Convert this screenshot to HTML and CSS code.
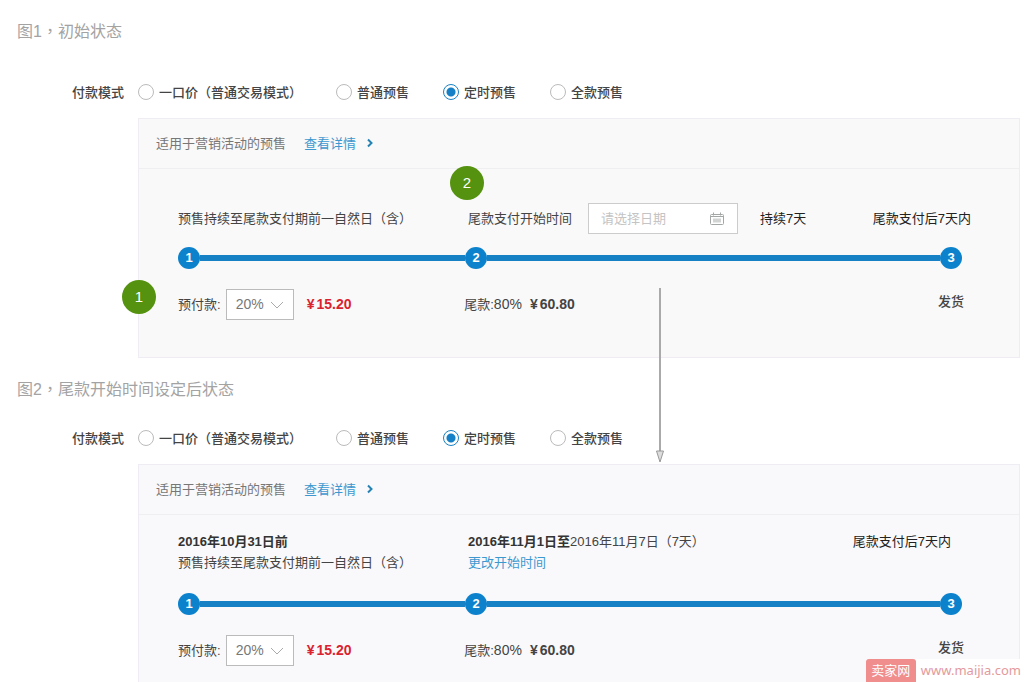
FILE: index.html
```html
<!DOCTYPE html>
<html lang="zh-CN">
<head>
<meta charset="utf-8">
<title>付款模式</title>
<link rel="stylesheet" href="styles.css">
</head>
<body>
<main class="page">
  <section class="figure">
    <h2 class="caption" lang="zh-TW">图1，初始状态</h2>
    <div class="modes" role="radiogroup" aria-labelledby="mode-a">
      <span class="modes-title" id="mode-a">付款模式</span>
      <label class="mode"><input type="radio" name="mode-a">一口价（普通交易模式）</label>
      <label class="mode"><input type="radio" name="mode-a">普通预售</label>
      <label class="mode"><input type="radio" name="mode-a" checked>定时预售</label>
      <label class="mode"><input type="radio" name="mode-a">全款预售</label>
    </div>
    <div class="panel">
      <span class="marker marker-time">2</span>
      <div class="panel-head">
        <span>适用于营销活动的预售</span>
        <a class="link" href="#">查看详情<svg class="more" viewBox="0 0 6 10"><path d="M1 1.500 4.500 5 1 8.500"/></svg></a>
      </div>
      <div class="panel-body">
        <div class="row row-top">
          <div>预售持续至尾款支付期前一自然日（含）</div>
          <div class="when">
            <label for="start">尾款支付开始时间</label>
            <span class="date">
              <input id="start" type="text" placeholder="请选择日期">
              <svg class="calendar" viewBox="0 0 16 14"><rect x="1.500" y="2.500" width="13" height="10" rx="1"/><path d="M4.500 0.500v3M11.500 0.500v3M1.500 4.500h13M5 6.500v4M7 6.500v4M9 6.500v4M11 6.500v4"/></svg>
            </span>
            <span class="lasting">持续7天</span>
          </div>
          <div class="deadline">尾款支付后7天内</div>
        </div>
        <div class="rail">
          <span class="node">1</span><span class="bar bar-first"></span><span class="node">2</span><span class="bar bar-last"></span><span class="node">3</span>
        </div>
        <div class="row row-bottom">
          <div class="pay">
            <span class="marker marker-pay">1</span>
            <label for="rate-a">预付款:</label>
            <span class="rate"><select id="rate-a"><option>20%</option></select><svg class="chevron" viewBox="0 0 14 8"><path d="M1 1l6 6 6-6"/></svg></span>
            <strong class="price price-red"><span>¥</span>15.20</strong>
          </div>
          <div class="rest">尾款:<span class="share">80%</span><strong class="price"><span>¥</span>60.80</strong></div>
          <div class="ship">发货</div>
        </div>
      </div>
      <svg class="arrow" viewBox="0 0 10 176"><path class="shaft" d="M5 0v164"/><path class="tip" d="M1.500 163h7L5 174z"/></svg>
    </div>
  </section>

  <section class="figure figure-set">
    <h2 class="caption" lang="zh-TW">图2，尾款开始时间设定后状态</h2>
    <div class="modes" role="radiogroup" aria-labelledby="mode-b">
      <span class="modes-title" id="mode-b">付款模式</span>
      <label class="mode"><input type="radio" name="mode-b">一口价（普通交易模式）</label>
      <label class="mode"><input type="radio" name="mode-b">普通预售</label>
      <label class="mode"><input type="radio" name="mode-b" checked>定时预售</label>
      <label class="mode"><input type="radio" name="mode-b">全款预售</label>
    </div>
    <div class="panel panel-set">
      <div class="panel-head">
        <span>适用于营销活动的预售</span>
        <a class="link" href="#">查看详情<svg class="more" viewBox="0 0 6 10"><path d="M1 1.500 4.500 5 1 8.500"/></svg></a>
      </div>
      <div class="panel-body">
        <div class="row row-top row-dates">
          <div><b>2016年10月31日前</b><br>预售持续至尾款支付期前一自然日（含）</div>
          <div class="when-set"><b>2016年11月1日至</b>2016年11月7日（7天）<br><a class="link" href="#">更改开始时间</a></div>
          <div class="deadline-set">尾款支付后7天内</div>
        </div>
        <div class="rail">
          <span class="node">1</span><span class="bar bar-first"></span><span class="node">2</span><span class="bar bar-last"></span><span class="node">3</span>
        </div>
        <div class="row row-bottom">
          <div class="pay">
            <label for="rate-b">预付款:</label>
            <span class="rate"><select id="rate-b"><option>20%</option></select><svg class="chevron" viewBox="0 0 14 8"><path d="M1 1l6 6 6-6"/></svg></span>
            <strong class="price price-red"><span>¥</span>15.20</strong>
          </div>
          <div class="rest">尾款:<span class="share">80%</span><strong class="price"><span>¥</span>60.80</strong></div>
          <div class="ship">发货</div>
        </div>
      </div>
    </div>
  </section>
  <div class="stamp"><span class="stamp-name">卖家网</span><span class="stamp-url">www.maijia.com</span></div>
</main>
</body>
</html>
```
FILE: styles.css
```css
* { box-sizing: border-box; }

body {
  margin: 0;
  background: #fff;
  color: #444;
  font: 13px/21px "Liberation Sans", "Noto Sans CJK SC", sans-serif;
}

.page {
  position: relative;
  display: flex;
  flex-direction: column;
  min-height: 100vh;
  padding-right: 6px;
  overflow: hidden;
}

.figure { padding-top: 20px; }

.figure-set {
  flex: 1;
  display: flex;
  flex-direction: column;
}

.caption {
  margin: 0 0 36px 17px;
  color: #a3a3a3;
  font: 400 16px/24px "Liberation Sans", "Noto Sans CJK TC", sans-serif;
}

.figure-set .caption { margin-bottom: 24px; }

.modes {
  display: flex;
  align-items: center;
  gap: 34px;
  height: 24px;
  margin-bottom: 14px;
  color: #444;
  font-weight: 500;
}

.modes-title {
  width: 124px;
  margin-right: -20px;
  text-align: right;
}

.mode {
  display: flex;
  align-items: center;
  gap: 5px;
}

.mode input {
  appearance: none;
  width: 16px;
  height: 16px;
  margin: 0;
  border: 1px solid #bbb;
  border-radius: 50%;
  background: #fff;
}

.mode input:checked {
  border-color: #1a82c4;
  background: radial-gradient(circle, #1580c5 4px, #fff 5px);
}

.panel {
  position: relative;
  margin-left: 138px;
  border: 1px solid #efedf3;
  background: #f9f9f9;
}

.panel-set {
  flex: 1;
  border-bottom: 0;
  background: #f9f9fb;
}

.panel-head {
  display: flex;
  align-items: center;
  gap: 18px;
  height: 50px;
  padding-left: 17px;
  border-bottom: 1px solid #efeff2;
  color: #777;
}

.link {
  color: #3d98cf;
  text-decoration: none;
}

.more {
  width: 6px;
  height: 10px;
  margin-left: 11px;
  fill: none;
  stroke: #2583b4;
  stroke-width: 2;
}

.panel-body { padding: 0 57px 37px 39px; }

.panel-set .panel-body { padding-bottom: 0; }

.row {
  display: grid;
  grid-template-columns: 37% 1fr auto;
  white-space: nowrap;
}

.row-top {
  align-items: end;
  min-height: 78px;
  padding-bottom: 18px;
}

.when {
  display: flex;
  align-items: center;
  height: 31px;
  margin-bottom: -5px;
}

.date {
  position: relative;
  display: block;
  margin: 0 22px 0 16px;
}

.date input {
  display: block;
  width: 150px;
  height: 31px;
  padding: 0 34px 0 12px;
  border: 1px solid #ccc;
  border-radius: 0;
  background: #fff;
  color: #444;
  font: inherit;
}

.date input::placeholder { color: #c4c4c4; }

.calendar {
  position: absolute;
  top: 9px;
  right: 13px;
  width: 16px;
  height: 14px;
  fill: none;
  stroke: #a3a8a6;
}

.lasting, .deadline, .deadline-set { color: #222; }

.deadline { margin-right: -9px; }

.row-dates { align-items: start; padding-top: 16px; }

.deadline-set { margin-right: 11px; }

.row-dates b { color: #333; }

.rail {
  display: flex;
  align-items: center;
}

.node {
  width: 22px;
  height: 22px;
  border-radius: 50%;
  background: #0d82cc;
  color: #fff;
  font-weight: 700;
  line-height: 22px;
  text-align: center;
}

.bar { height: 6px; background: #1681c4; }

.bar-first { flex: 265; }

.bar-last { flex: 453; }

.row-bottom {
  grid-template-columns: 287fr 475fr 24px;
  align-items: center;
  margin-top: 20px;
}

.pay {
  position: relative;
  display: flex;
  align-items: center;
}

.rate {
  position: relative;
  margin-left: 5px;
}

.rate select {
  appearance: none;
  display: block;
  width: 68px;
  height: 31px;
  padding: 0 9px;
  border: 1px solid #bbb;
  border-radius: 0;
  background: #fff;
  color: #777;
  font: inherit;
  font-size: 14px;
}

.chevron {
  position: absolute;
  top: 12px;
  right: 10px;
  width: 14px;
  height: 8px;
  fill: none;
  stroke: #aaa;
  pointer-events: none;
}

.share { font-size: 14px; }

.price {
  margin-left: 8px;
  color: #444;
  font-size: 14px;
}

.price span { margin-right: 2px; }

.pay .price { margin-left: 13px; }

.pay .price-red { color: #d9232e; }

.ship {
  margin-bottom: 6px;
  font-weight: 500;
}

.marker {
  position: absolute;
  width: 34px;
  height: 34px;
  border-radius: 50%;
  background: #55920f;
  color: #fff;
  font-size: 15px;
  line-height: 34px;
  text-align: center;
}

.marker-time { top: 47px; left: 311px; }

.marker-pay { top: -9px; left: -56px; }

.arrow {
  position: absolute;
  top: 169px;
  left: 516px;
  z-index: 1;
  width: 10px;
  height: 176px;
  fill: none;
  stroke: #aaa;
}

.shaft { stroke-width: 2; }

.tip { fill: #ddd; stroke: #999; }

.stamp {
  position: absolute;
  right: 0;
  bottom: 0;
  display: flex;
  gap: 5px;
  padding-right: 5px;
  background: #fff;
  line-height: 23px;
}

.stamp-name {
  width: 50px;
  border-radius: 3px 3px 0 0;
  background: #f08d8d;
  color: #fff;
  text-align: center;
}

.stamp-url {
  color: #e39a9c;
  font-family: "Noto Sans", sans-serif;
}
```
